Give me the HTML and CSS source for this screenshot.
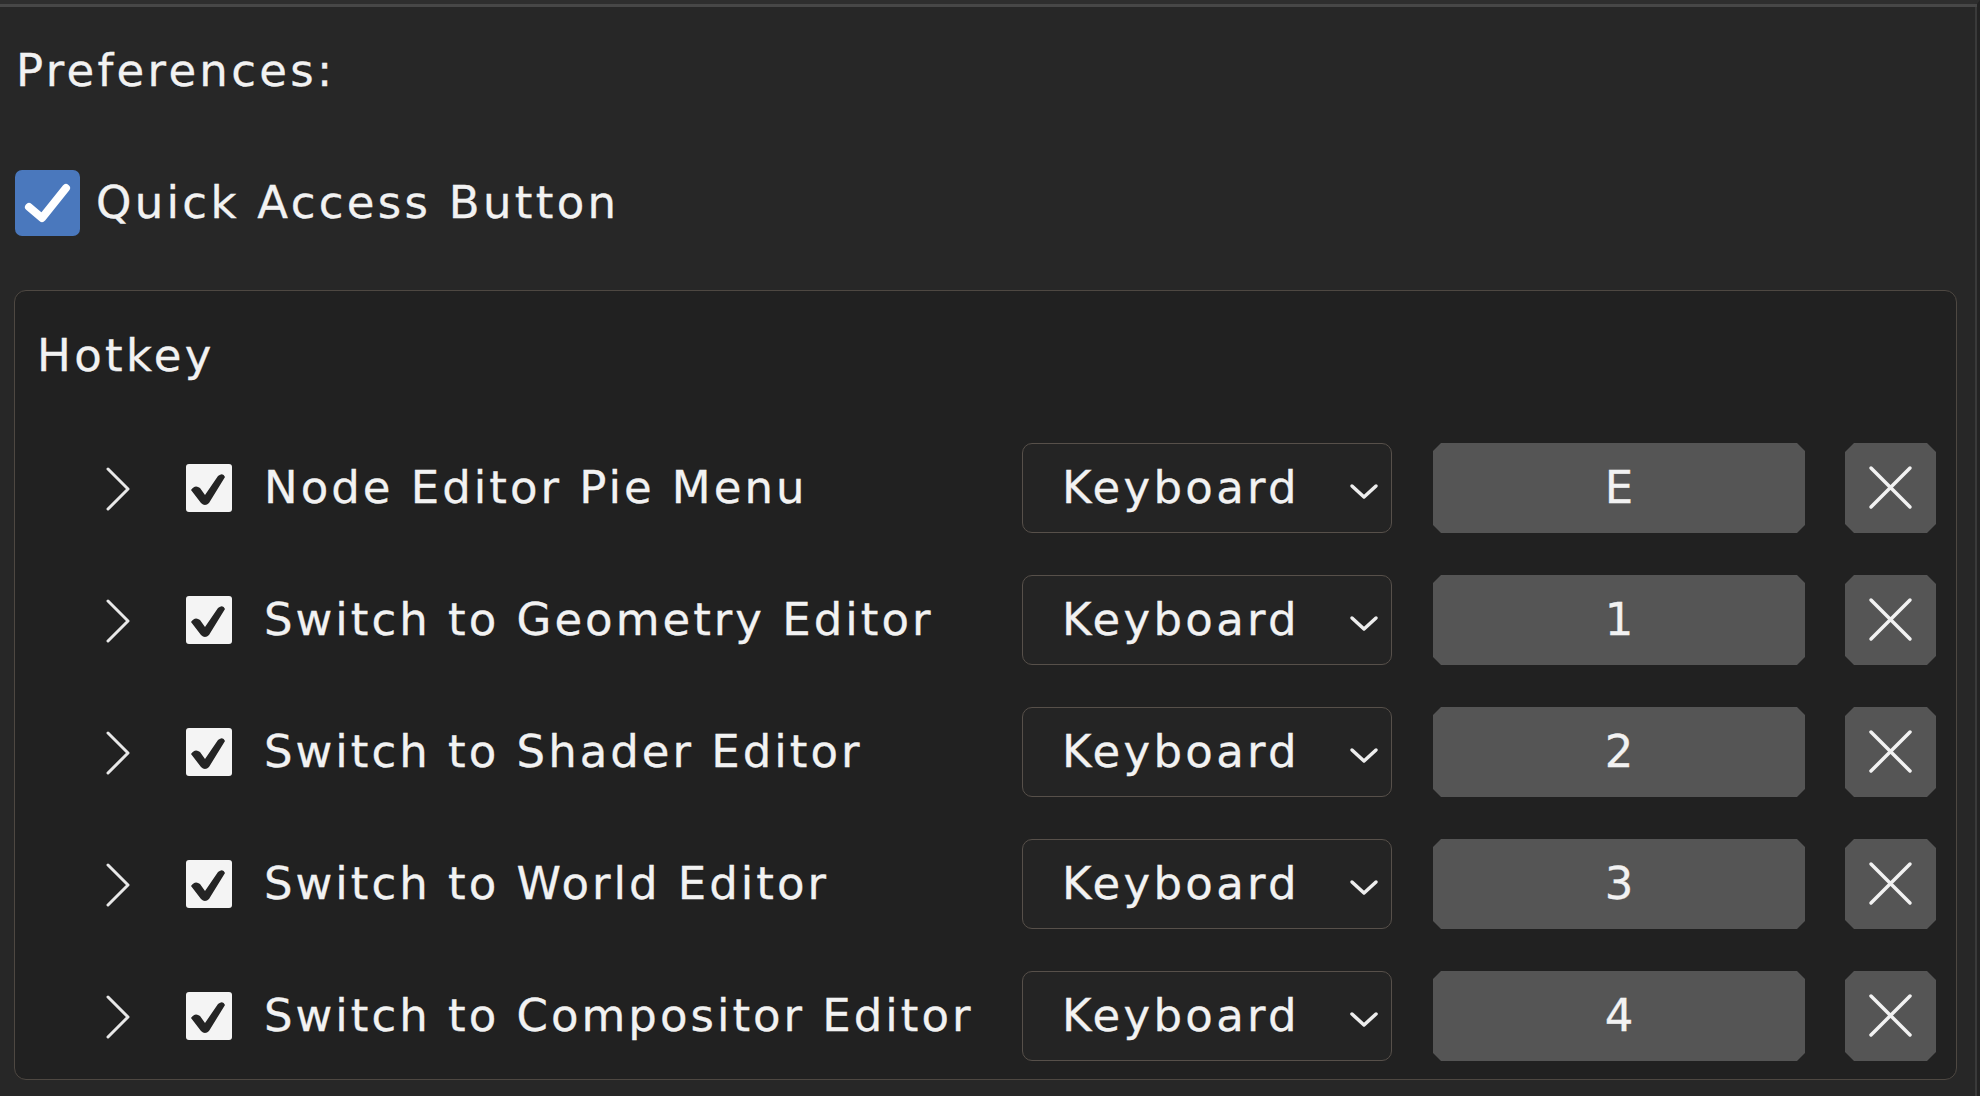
FILE: index.html
```html
<!DOCTYPE html>
<html lang="en">
<head>
<meta charset="utf-8">
<title>Preferences</title>
<link rel="stylesheet" href="styles.css">
</head>
<body>
<div class="window">
  <div class="title">Preferences:</div>
  <div class="quick">
    <span class="bluebox">
      <svg width="65" height="66" viewBox="0 0 65 66"><path d="M14 37 L27 48 L51 18" fill="none" stroke="#ffffff" stroke-width="8" stroke-linecap="round" stroke-linejoin="round"/></svg>
    </span>
    <span class="quick-label">Quick Access Button</span>
  </div>
  <div class="hotkey-box">
    <div class="box-title">Hotkey</div>
    <div class="rows">
      <div class="row">
        <svg class="chev" width="26" height="44" viewBox="0 0 26 44"><polyline points="3,2 23,22 3,42" fill="none" stroke="#e8e8e8" stroke-width="3" stroke-linecap="round" stroke-linejoin="round"/></svg>
        <span class="wcheck"><svg width="46" height="48" viewBox="0 0 46 48"><path d="M5 26 Q9 20 14 24 L19 31 L32 12 Q37 8 39 13 L23 39 Q19 43 15 39 Z" fill="#242424"/></svg></span>
        <span class="label">Node Editor Pie Menu</span>
        <span class="dropdown"><span class="dd-text">Keyboard</span><svg width="30" height="18" viewBox="0 0 30 18"><polyline points="3,4 15,15 27,4" fill="none" stroke="#ededed" stroke-width="3.5" stroke-linecap="round" stroke-linejoin="round"/></svg></span>
        <span class="key">E</span>
        <span class="xbtn"><svg width="91" height="90" viewBox="0 0 91 90"><path d="M26 25 L65 64 M65 25 L26 64" stroke="#f2f2f2" stroke-width="3.5" stroke-linecap="round"/></svg></span>
      </div>
      <div class="row">
        <svg class="chev" width="26" height="44" viewBox="0 0 26 44"><polyline points="3,2 23,22 3,42" fill="none" stroke="#e8e8e8" stroke-width="3" stroke-linecap="round" stroke-linejoin="round"/></svg>
        <span class="wcheck"><svg width="46" height="48" viewBox="0 0 46 48"><path d="M5 26 Q9 20 14 24 L19 31 L32 12 Q37 8 39 13 L23 39 Q19 43 15 39 Z" fill="#242424"/></svg></span>
        <span class="label">Switch to Geometry Editor</span>
        <span class="dropdown"><span class="dd-text">Keyboard</span><svg width="30" height="18" viewBox="0 0 30 18"><polyline points="3,4 15,15 27,4" fill="none" stroke="#ededed" stroke-width="3.5" stroke-linecap="round" stroke-linejoin="round"/></svg></span>
        <span class="key">1</span>
        <span class="xbtn"><svg width="91" height="90" viewBox="0 0 91 90"><path d="M26 25 L65 64 M65 25 L26 64" stroke="#f2f2f2" stroke-width="3.5" stroke-linecap="round"/></svg></span>
      </div>
      <div class="row">
        <svg class="chev" width="26" height="44" viewBox="0 0 26 44"><polyline points="3,2 23,22 3,42" fill="none" stroke="#e8e8e8" stroke-width="3" stroke-linecap="round" stroke-linejoin="round"/></svg>
        <span class="wcheck"><svg width="46" height="48" viewBox="0 0 46 48"><path d="M5 26 Q9 20 14 24 L19 31 L32 12 Q37 8 39 13 L23 39 Q19 43 15 39 Z" fill="#242424"/></svg></span>
        <span class="label">Switch to Shader Editor</span>
        <span class="dropdown"><span class="dd-text">Keyboard</span><svg width="30" height="18" viewBox="0 0 30 18"><polyline points="3,4 15,15 27,4" fill="none" stroke="#ededed" stroke-width="3.5" stroke-linecap="round" stroke-linejoin="round"/></svg></span>
        <span class="key">2</span>
        <span class="xbtn"><svg width="91" height="90" viewBox="0 0 91 90"><path d="M26 25 L65 64 M65 25 L26 64" stroke="#f2f2f2" stroke-width="3.5" stroke-linecap="round"/></svg></span>
      </div>
      <div class="row">
        <svg class="chev" width="26" height="44" viewBox="0 0 26 44"><polyline points="3,2 23,22 3,42" fill="none" stroke="#e8e8e8" stroke-width="3" stroke-linecap="round" stroke-linejoin="round"/></svg>
        <span class="wcheck"><svg width="46" height="48" viewBox="0 0 46 48"><path d="M5 26 Q9 20 14 24 L19 31 L32 12 Q37 8 39 13 L23 39 Q19 43 15 39 Z" fill="#242424"/></svg></span>
        <span class="label">Switch to World Editor</span>
        <span class="dropdown"><span class="dd-text">Keyboard</span><svg width="30" height="18" viewBox="0 0 30 18"><polyline points="3,4 15,15 27,4" fill="none" stroke="#ededed" stroke-width="3.5" stroke-linecap="round" stroke-linejoin="round"/></svg></span>
        <span class="key">3</span>
        <span class="xbtn"><svg width="91" height="90" viewBox="0 0 91 90"><path d="M26 25 L65 64 M65 25 L26 64" stroke="#f2f2f2" stroke-width="3.5" stroke-linecap="round"/></svg></span>
      </div>
      <div class="row">
        <svg class="chev" width="26" height="44" viewBox="0 0 26 44"><polyline points="3,2 23,22 3,42" fill="none" stroke="#e8e8e8" stroke-width="3" stroke-linecap="round" stroke-linejoin="round"/></svg>
        <span class="wcheck"><svg width="46" height="48" viewBox="0 0 46 48"><path d="M5 26 Q9 20 14 24 L19 31 L32 12 Q37 8 39 13 L23 39 Q19 43 15 39 Z" fill="#242424"/></svg></span>
        <span class="label">Switch to Compositor Editor</span>
        <span class="dropdown"><span class="dd-text">Keyboard</span><svg width="30" height="18" viewBox="0 0 30 18"><polyline points="3,4 15,15 27,4" fill="none" stroke="#ededed" stroke-width="3.5" stroke-linecap="round" stroke-linejoin="round"/></svg></span>
        <span class="key">4</span>
        <span class="xbtn"><svg width="91" height="90" viewBox="0 0 91 90"><path d="M26 25 L65 64 M65 25 L26 64" stroke="#f2f2f2" stroke-width="3.5" stroke-linecap="round"/></svg></span>
      </div>
    </div>
  </div>
</div>
</body>
</html>
```
FILE: styles.css
```css
html, body {
  margin: 0;
  padding: 0;
  background: #272727;
}
body {
  font-family: "DejaVu Sans", "Liberation Sans", sans-serif;
  font-size: 45px;
  letter-spacing: 3.3px;
  color: #f2f2f2;
  -webkit-text-stroke: 0.3px #f2f2f2;
}
.window {
  width: 1980px;
  height: 1096px;
  box-sizing: border-box;
  border-top: 4px solid #2e2e2e;
  border-right: 3px solid #232323;
  box-shadow: inset 0 3px 0 #474747, inset -2px 0 0 #3a3a3a;
  padding: 41px 20px 0 14px;
  background: #272727;
  overflow: hidden;
}
.title {
  line-height: 52px;
  height: 52px;
  padding-left: 2px;
}
.quick {
  display: flex;
  align-items: center;
  margin-top: 73px;
  height: 66px;
}
.bluebox {
  width: 65px;
  height: 66px;
  margin-left: 1px;
  background: #4a78bd;
  border-radius: 7px;
  display: flex;
}
.quick-label {
  margin-left: 16px;
  line-height: 52px;
}
.hotkey-box {
  margin-top: 54px;
  border: 1px solid #4e4842;
  border-radius: 12px;
  background: #212121;
  padding: 39px 20px 18px 20px;
}
.box-title {
  line-height: 52px;
  height: 52px;
  padding-left: 2px;
}
.rows {
  margin-top: 61px;
  display: flex;
  flex-direction: column;
  gap: 42px;
}
.row {
  display: flex;
  align-items: center;
  height: 90px;
  padding-left: 70px;
}
.chev {
  flex: none;
  margin-top: 2px;
}
.wcheck {
  flex: none;
  width: 46px;
  height: 48px;
  margin-left: 55px;
  background: #f4f4f4;
  border-radius: 3px;
  display: flex;
}
.label {
  flex: 1;
  margin-left: 32px;
  line-height: 52px;
  letter-spacing: 3px;
  white-space: nowrap;
}
.dropdown {
  flex: none;
  box-sizing: border-box;
  width: 370px;
  height: 90px;
  border: 1.5px solid #57504a;
  border-radius: 10px;
  background: #242424;
  display: flex;
  align-items: center;
  justify-content: space-between;
  padding: 0 12px 0 39px;
}
.dd-text {
  line-height: 52px;
}
.dropdown svg {
  margin-top: 6px;
}
.key {
  flex: none;
  width: 372px;
  height: 90px;
  margin-left: 41px;
  background: #555555;
  clip-path: polygon(8px 0, calc(100% - 8px) 0, 100% 8px, 100% calc(100% - 8px), calc(100% - 8px) 100%, 8px 100%, 0 calc(100% - 8px), 0 8px);
  display: flex;
  align-items: center;
  justify-content: center;
  line-height: 52px;
  letter-spacing: 0;
}
.xbtn {
  flex: none;
  width: 91px;
  height: 90px;
  margin-left: 40px;
  background: #555555;
  clip-path: polygon(9px 0, calc(100% - 9px) 0, 100% 9px, 100% calc(100% - 9px), calc(100% - 9px) 100%, 9px 100%, 0 calc(100% - 9px), 0 9px);
  display: flex;
}
```
